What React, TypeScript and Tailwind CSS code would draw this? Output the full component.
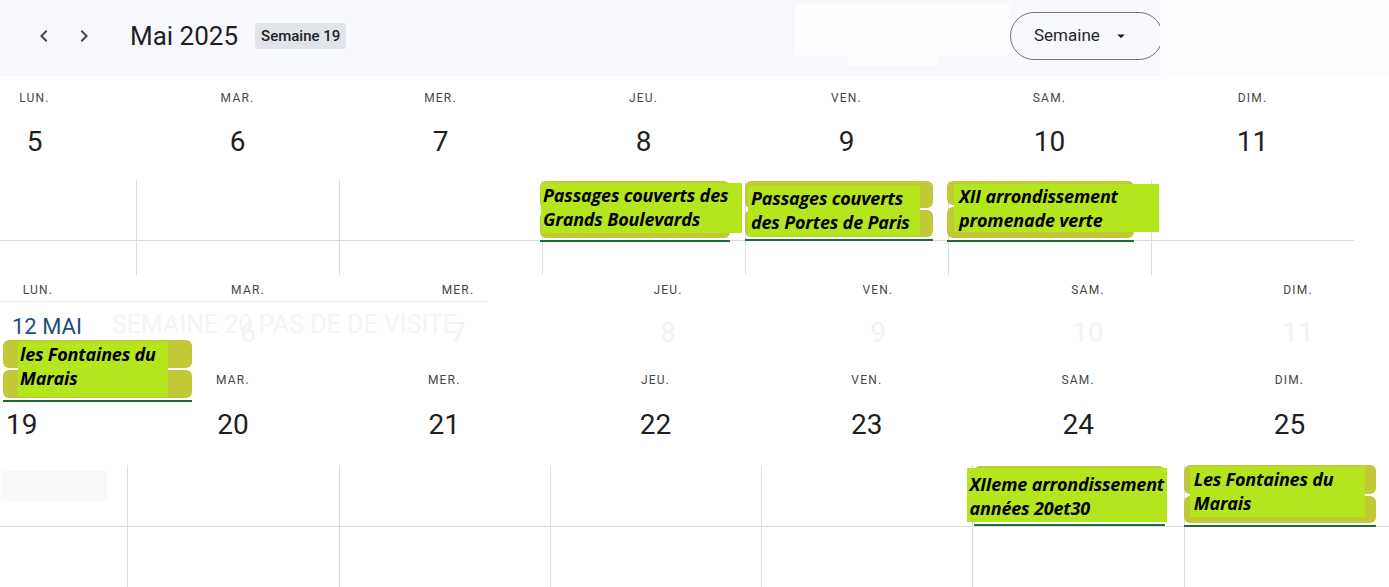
import React from "react";

const labelCls =
  "h-[14px] text-[12px] leading-[14px] tracking-[0.1em] text-[#444746] font-['Roboto',sans-serif]";
const numCls =
  "h-[36px] text-[28px] leading-[36px] text-[#1f1f1f] font-['Roboto',sans-serif]";
const eventText =
  "font-['Open_Sans',sans-serif] font-bold italic text-[18px] leading-[24px] tracking-[-0.01em] text-black whitespace-nowrap";

const week1 = [
  ["LUN.", "5"],
  ["MAR.", "6"],
  ["MER.", "7"],
  ["JEU.", "8"],
  ["VEN.", "9"],
  ["SAM.", "10"],
  ["DIM.", "11"],
];
const week2 = [
  ["LUN.", ""],
  ["MAR.", "6"],
  ["MER.", "7"],
  ["JEU.", "8"],
  ["VEN.", "9"],
  ["SAM.", "10"],
  ["DIM.", "11"],
];
const week3 = [
  ["LUN.", "19"],
  ["MAR.", "20"],
  ["MER.", "21"],
  ["JEU.", "22"],
  ["VEN.", "23"],
  ["SAM.", "24"],
  ["DIM.", "25"],
];

function Chevron({ dir }: { dir: "left" | "right" }) {
  return (
    <div className="flex h-[40px] w-[40px] shrink-0 items-center justify-center">
      <svg width="24" height="24" viewBox="0 0 24 24" fill="#444746">
        {dir === "left" ? (
          <path d="M15.41 7.41 14 6l-6 6 6 6 1.41-1.41L10.83 12z" />
        ) : (
          <path d="M8.59 16.59 10 18l6-6-6-6-1.41 1.41L13.17 12z" />
        )}
      </svg>
    </div>
  );
}

function Pills({ w, h1, h2 }: { w: string; h1: string; h2: string }) {
  return (
    <div className={`flex flex-col gap-[2px] ${w}`}>
      <div className={`${h1} rounded-[6px] bg-[#c2c936]`} />
      <div className={`${h2} rounded-[6px] bg-[#c2c936]`} />
      <div className="h-[2px] bg-[#1b6b3c]" />
    </div>
  );
}

export default function App() {
  return (
    <div className="relative h-[587px] w-[1389px] overflow-hidden bg-white">
      {/* top bar */}
      <div className="flex h-[76px]">
        <div className="flex w-[1160px] shrink-0 items-center overflow-hidden bg-[#f8f9fc] pb-[4px] pl-[24px]">
          <div className="flex w-[771px] shrink-0 items-center">
            <Chevron dir="left" />
            <Chevron dir="right" />
            <span className="ml-[26px] whitespace-nowrap font-['Roboto',sans-serif] text-[26px] text-[#1f1f1f]">
              Mai 2025
            </span>
            <span className="ml-[17px] whitespace-nowrap rounded-[4px] bg-[#e1e4ea] px-[6px] py-[2px] font-['Roboto',sans-serif] text-[15px] font-medium text-[#1f1f1f]">
              Semaine 19
            </span>
          </div>
          <div className="flex h-[66px] w-[215px] shrink-0 flex-col self-start pt-[4px]">
            <div className="h-[54px] bg-[#fefeff]" />
            <div className="ml-[53px] h-[12px] w-[90px] bg-[#fefeff]" />
          </div>
          <button className="flex h-[48px] w-[153px] shrink-0 items-center rounded-full border border-[#747775] pl-[23px] font-['Roboto',sans-serif] text-[17px] text-[#1f1f1f]">
            Semaine
            <svg className="ml-[12px]" width="18" height="18" viewBox="0 0 24 24" fill="#1f1f1f">
              <path d="M7 10l5 5 5-5z" />
            </svg>
          </button>
        </div>
        <div className="flex-1 bg-[#fdfdff]" />
      </div>

      {/* week 1 */}
      <div className="ml-[-67px] flex">
        {week1.map(([d, n], i) => (
          <div key={d} className="w-[203px] shrink-0">
            <div className="flex h-[104px] flex-col items-center pt-[15px]">
              <div className={labelCls}>{d}</div>
              <div className={`mt-[19px] ${numCls}`}>{n}</div>
            </div>
            <div className="flex h-[61px] flex-col items-start border-b border-l border-[#dadce0] pt-px">
              {i === 3 && (
                <div className="relative ml-[-3px] w-[202px]">
                  <Pills w="w-[190px]" h1="h-[28px]" h2="h-[27px]" />
                  <div className="absolute left-[1px] top-[2px] h-[50px] w-[201px] bg-[#b5e61d] pl-[2px]">
                    <div className={eventText}>Passages couverts des</div>
                    <div className={eventText}>Grands Boulevards</div>
                  </div>
                </div>
              )}
              {i === 4 && (
                <div className="relative ml-[-1px] w-[188px]">
                  <Pills w="w-[188px]" h1="h-[27px]" h2="h-[27px]" />
                  <div className="absolute left-[3px] top-[5px] h-[50px] w-[172px] bg-[#b5e61d] pl-[3px]">
                    <div className={eventText}>Passages couverts</div>
                    <div className={eventText}>des Portes de Paris</div>
                  </div>
                </div>
              )}
              {i === 5 && (
                <div className="relative ml-[-2px] w-[212px]">
                  <Pills w="w-[187px]" h1="h-[24px]" h2="h-[31px]" />
                  <div className="absolute left-[7px] top-[3px] h-[48px] w-[205px] bg-[#b5e61d] pl-[5px]">
                    <div className={eventText}>XII arrondissement</div>
                    <div className={eventText}>promenade verte</div>
                  </div>
                </div>
              )}
            </div>
            <div className="h-[34px] border-l border-[#dadce0]" />
          </div>
        ))}
      </div>

      {/* week 2 (faded) */}
      <div className="relative h-[90px]">
        <div className="absolute left-0 top-[26px] h-px w-[488px] bg-[#eeeeee]" />
        <div className="absolute left-[112px] top-[31px] whitespace-nowrap font-['Roboto',sans-serif] text-[25px] text-[#f5f5f5]">
          SEMAINE 20 PAS DE DE VISITE
        </div>
        <div className="ml-[-67px] flex">
          {week2.map(([d, n], i) => (
            <div key={d} className="flex w-[210px] shrink-0 flex-col pt-[8px]">
              <div className={`self-center ${labelCls}`}>{d}</div>
              {i === 0 ? (
                <div className="relative ml-[79px] mt-[18px] whitespace-nowrap font-['Roboto',sans-serif] text-[22px] leading-[24px] text-[#1f4e79]">
                  12 MAI
                </div>
              ) : (
                <div className={`mt-[18px] self-center ${numCls} text-[#f3f3f3]`}>{n}</div>
              )}
            </div>
          ))}
        </div>
      </div>

      {/* week 3 */}
      <div className="ml-[-84px] flex">
        {week3.map(([d, n], i) => (
          <div key={d} className="w-[211.3px] shrink-0">
            <div className="flex h-[100px] flex-col items-center pt-[8px]">
              <div className={labelCls}>{d}</div>
              <div className={`mt-[20px] ${numCls}`}>{n}</div>
            </div>
            <div className="flex h-[62px] flex-col items-start border-b border-l border-[#dadce0]">
              {i === 0 && <div className="ml-[84px] mt-[6px] h-[30px] w-[106px] bg-[#f9f9f9]" />}
              {i === 5 && (
                <div className="relative ml-[-6px] w-[200px]">
                  <div className="ml-[7px] mt-[1px]">
                    <Pills w="w-[191px]" h1="h-[28px]" h2="h-[26px]" />
                  </div>
                  <div className="absolute left-0 top-[3px] h-[54px] w-[200px] bg-[#b5e61d] pl-[2px] pt-[4px]">
                    <div className={eventText}>XIIeme arrondissement</div>
                    <div className={eventText}>années 20et30</div>
                  </div>
                </div>
              )}
              {i === 6 && (
                <div className="relative ml-[-1px] w-[192px]">
                  <Pills w="w-[192px]" h1="h-[29px]" h2="h-[27px]" />
                  <div className="absolute left-[6px] top-[2px] h-[50px] w-[175px] bg-[#b5e61d] pl-[4px]">
                    <div className={eventText}>Les Fontaines du</div>
                    <div className={eventText}>Marais</div>
                  </div>
                </div>
              )}
            </div>
            <div className="h-[60px] border-l border-[#dadce0]" />
          </div>
        ))}
      </div>

      {/* pasted event over weeks 2 and 3 */}
      <div className="absolute left-[3px] top-[340px] w-[190px]">
        <Pills w="w-[189px]" h1="h-[28px]" h2="h-[28px]" />
        <div className="absolute left-[15px] top-[2px] h-[55px] w-[150px] bg-[#b5e61d] pl-[2px]">
          <div className={eventText}>les Fontaines du</div>
          <div className={eventText}>Marais</div>
        </div>
      </div>
    </div>
  );
}
